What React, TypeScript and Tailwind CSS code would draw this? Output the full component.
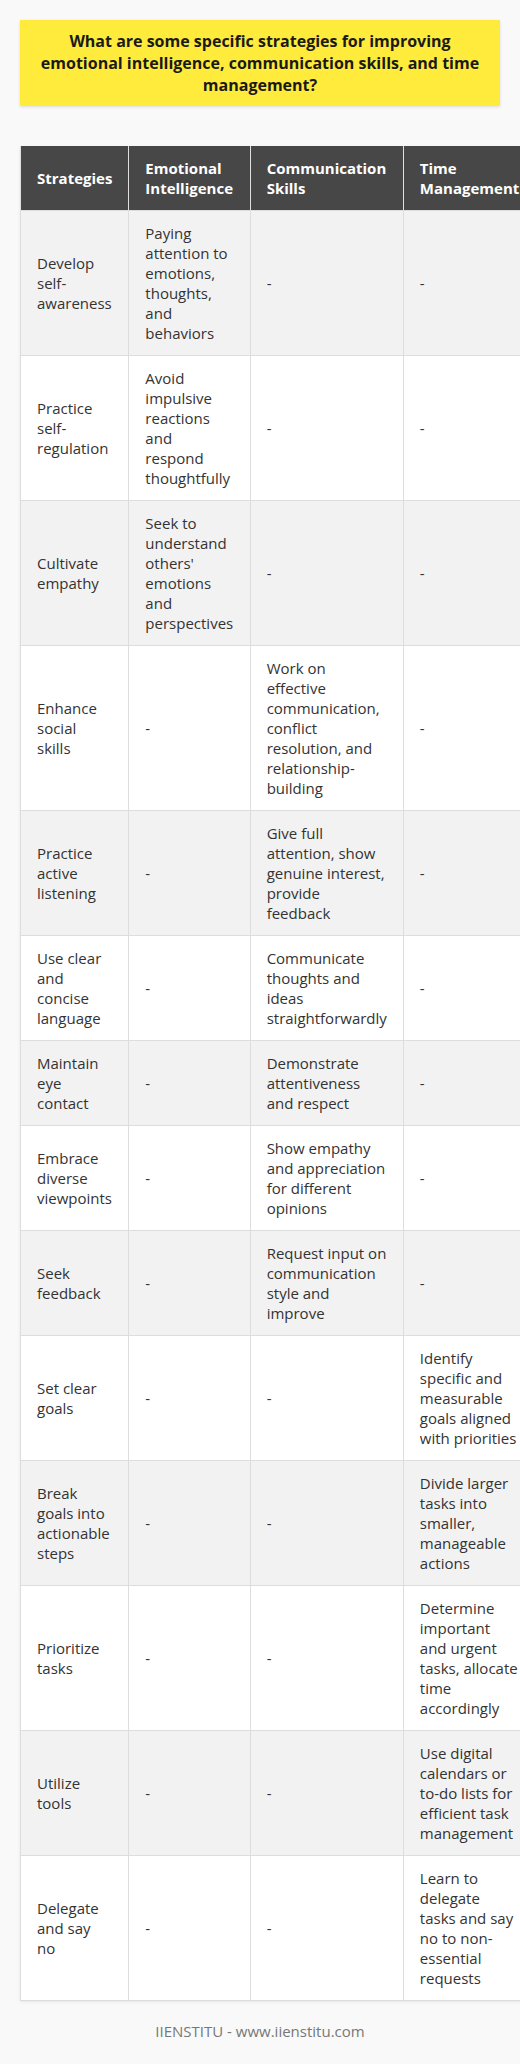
const rows: [string, string, string, string][] = [
  ['Develop self-awareness', 'Paying attention to emotions, thoughts, and behaviors', '-', '-'],
  ['Practice self-regulation', 'Avoid impulsive reactions and respond thoughtfully', '-', '-'],
  ['Cultivate empathy', "Seek to understand others' emotions and perspectives", '-', '-'],
  ['Enhance social skills', '-', 'Work on effective communication, conflict resolution, and relationship-building', '-'],
  ['Practice active listening', '-', 'Give full attention, show genuine interest, provide feedback', '-'],
  ['Use clear and concise language', '-', 'Communicate thoughts and ideas straightforwardly', '-'],
  ['Maintain eye contact', '-', 'Demonstrate attentiveness and respect', '-'],
  ['Embrace diverse viewpoints', '-', 'Show empathy and appreciation for different opinions', '-'],
  ['Seek feedback', '-', 'Request input on communication style and improve', '-'],
  ['Set clear goals', '-', '-', 'Identify specific and measurable goals aligned with priorities'],
  ['Break goals into actionable steps', '-', '-', 'Divide larger tasks into smaller, manageable actions'],
  ['Prioritize tasks', '-', '-', 'Determine important and urgent tasks, allocate time accordingly'],
  ['Utilize tools', '-', '-', 'Use digital calendars or to-do lists for efficient task management'],
  ['Delegate and say no', '-', '-', 'Learn to delegate tasks and say no to non-essential requests'],
];

const headers = ['Strategies', 'Emotional Intelligence', 'Communication Skills', 'Time Management'];

// inner text widths per column, so the wrapping lands where it does in the source
const colW = ['w-[75.35px]', 'w-[88.3px]', 'w-[120.2px]', 'w-[98.8px]'];

export default function App() {
  return (
    <div
      className="w-full overflow-x-hidden bg-[#f9f9f9] min-h-[2064px] px-5 pt-5 pb-6 text-[#333]"
      style={{ fontFamily: '"Open Sans", "Liberation Sans", sans-serif' }}
    >
      <div className="bg-[#ffeb3b] px-4 py-2.5 shadow-[0_1px_3px_rgba(0,0,0,0.12)] mb-10">
        <h1 className="text-center text-[16px] leading-[22px] font-bold text-[#1a1a1a]">
          What are some specific strategies for improving emotional intelligence, communication skills, and time management?
        </h1>
      </div>

      <table className="w-max border-collapse text-[15px] leading-[20px] bg-white shadow-[0_1px_3px_rgba(0,0,0,0.08)]">
        <thead>
          <tr className="bg-[#474747] text-white">
            {headers.map((h, j) => (
              <th
                key={h}
                className="px-4 py-3 text-left font-bold border-x border-[#e0e0e0] align-middle"
              >
                <div className={colW[j]}>{h}</div>
              </th>
            ))}
          </tr>
        </thead>
        <tbody>
          {rows.map((r, i) => (
            <tr key={i} className={i % 2 === 0 ? 'bg-[#f2f2f2]' : 'bg-white'}>
              {r.map((c, j) => (
                <td key={j} className="px-4 py-3 border border-[#dddddd] align-middle">
                  <div className={colW[j]}>{c}</div>
                </td>
              ))}
            </tr>
          ))}
        </tbody>
      </table>

      <p className="mt-5 text-center text-[15px] leading-[20px] text-[#777]">IIENSTITU - www.iienstitu.com</p>
    </div>
  );
}
